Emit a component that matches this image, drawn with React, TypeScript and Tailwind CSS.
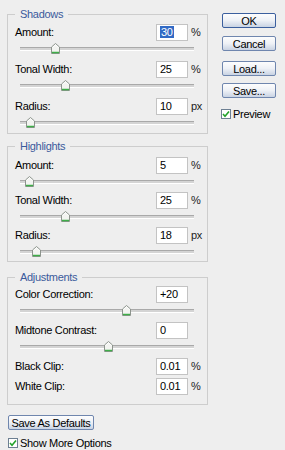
import React from "react";

const Thumb = () => (
  <svg width="9" height="11" viewBox="0 0 9 11">
    <path d="M0.5 10.5 V4 L4.5 0.5 L8.5 4 V10.5 Z" fill="#f3f4f1" stroke="#8d948d" />
    <path d="M1 9.5 H8" stroke="#3fae49" strokeWidth="1.5" />
    <path d="M1.5 4.5 L4.5 1.8 L7.5 4.5" stroke="#ffffff" fill="none" />
  </svg>
);

const Slider = ({ pos, h = 21 }: { pos: number; h?: number }) => (
  <div className="relative ml-[5px] w-[174px]" style={{ height: h }}>
    <div className="absolute left-0 right-0 top-[7px] h-[2px] border-t border-[#a9a9a9] border-b border-b-white bg-[#d4d4d4] box-content" />
    <div className="absolute top-[3px]" style={{ left: pos - 20 - 4 }}>
      <Thumb />
    </div>
  </div>
);

const Field = ({ label, value, unit, selected }: { label: string; value: string; unit?: string; selected?: boolean }) => (
  <div className="flex items-center h-[16px]">
    <span className="flex-1 leading-[12px]">{label}</span>
    <div className="w-[32px] h-[17px] bg-white border border-[#c3c3c3] flex items-center pl-[3px] leading-[12px]">
      {selected ? <span className="bg-[#316ac5] text-white px-[1px]">{value}</span> : value}
    </div>
    <span className="ml-[3px] w-[14px] leading-[12px] text-[#222]">{unit ?? ""}</span>
  </div>
);

const Group = ({ title, children, className }: { title: string; children: React.ReactNode; className?: string }) => (
  <fieldset className={"border border-[#cdcdcd] pl-[7px] pr-[2px] " + (className ?? "")}>
    <legend className="px-[5px] text-[#3a5a9c] leading-[12px]">{title}</legend>
    {children}
  </fieldset>
);

const Button = ({ children, primary, className }: { children: React.ReactNode; primary?: boolean; className?: string }) => (
  <div
    className={
      "h-[15px] flex items-center justify-center whitespace-nowrap rounded-[2px] border leading-[12px] bg-gradient-to-b from-[#fdfdfd] via-[#eef1f6] to-[#c9d3e3] " +
      (primary ? "border-[#3b5f9e] " : "border-[#6f86ae] ") +
      (className ?? "")
    }
  >
    {children}
  </div>
);

const Check = ({ label, className }: { label: string; className?: string }) => (
  <div className={"flex items-center " + (className ?? "")}>
    <div className="w-[10px] h-[10px] border border-[#6d7f92] bg-white flex items-center justify-center">
      <svg width="8" height="8" viewBox="0 0 8 8">
        <path d="M1 4 L3 6.2 L7 1.5" stroke="#22a22a" strokeWidth="1.6" fill="none" />
      </svg>
    </div>
    <span className="ml-[2px] leading-[12px]">{label}</span>
  </div>
);

export default function App() {
  return (
    <div className="w-[285px] h-[450px] bg-[#eeeeee] text-[11px] tracking-[-0.3px] text-black font-['Liberation_Sans',Arial,sans-serif] overflow-hidden">
      <div className="flex">
        <div className="ml-[7px] w-[201px] mt-[8px] flex flex-col">
          <Group title="Shadows">
            <div className="mt-[4px]" />
            <Field label="Amount:" value="30" unit="%" selected />
            <Slider pos={55} />
            <Field label="Tonal Width:" value="25" unit="%" />
            <Slider pos={65} />
            <Field label="Radius:" value="10" unit="px" />
            <Slider pos={30} h={19} />
          </Group>
          <Group title="Highlights" className="mt-[6px]">
            <div className="mt-[5px]" />
            <Field label="Amount:" value="5" unit="%" />
            <Slider pos={29} h={19} />
            <Field label="Tonal Width:" value="25" unit="%" />
            <Slider pos={65} h={19} />
            <Field label="Radius:" value="18" unit="px" />
            <Slider pos={36} h={18} />
          </Group>
          <Group title="Adjustments" className="mt-[9px]">
            <div className="mt-[3px]" />
            <Field label="Color Correction:" value="+20" />
            <Slider pos={126} h={20} />
            <Field label="Midtone Contrast:" value="0" />
            <Slider pos={108} h={20} />
            <Field label="Black Clip:" value="0.01" unit="%" />
            <div className="h-[4px]" />
            <Field label="White Clip:" value="0.01" unit="%" />
            <div className="h-[10px]" />
          </Group>
        </div>
        <div className="ml-[14px] mt-[13px] w-[54px] flex flex-col">
          <Button primary>OK</Button>
          <Button className="mt-[8px]">Cancel</Button>
          <Button className="mt-[10px]">Load...</Button>
          <Button className="mt-[7px]">Save...</Button>
          <Check label="Preview" className="mt-[10px] -ml-[1px]" />
        </div>
      </div>
      <div className="ml-[8px] mt-[10px] w-[86px]">
        <Button>Save As Defaults</Button>
      </div>
      <Check label="Show More Options" className="ml-[8px] mt-[7px]" />
    </div>
  );
}
